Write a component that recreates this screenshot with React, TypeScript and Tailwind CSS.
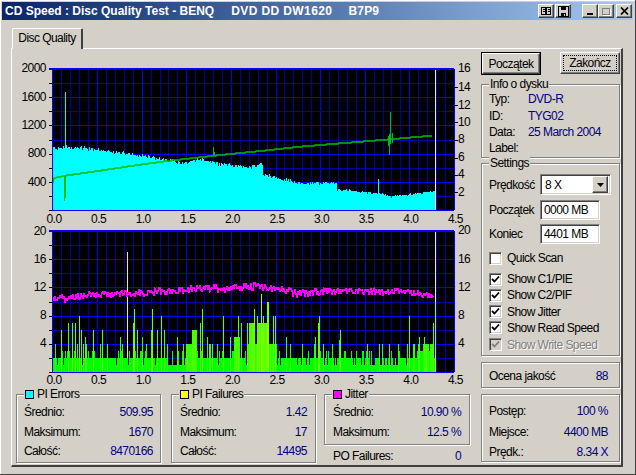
import React from "react";

const FONT = "'Liberation Sans', Arial, sans-serif";

let seed = 12345;
const rnd = () => {
  seed = (seed * 1664525 + 1013904223) % 4294967296;
  return seed / 4294967296;
};
const interp = (pts: number[][], x: number) => {
  for (let i = 1; i < pts.length; i++) {
    if (x <= pts[i][0]) {
      const [a, b] = pts[i - 1];
      const [c, d] = pts[i];
      return b + ((d - b) * (x - a)) / Math.max(1, c - a);
    }
  }
  return pts[pts.length - 1][1];
};

const X0 = 52.5;
const XS = 89.2;
const XEND = 435;

// chart 1 data
const cyanEnv = [[53,148.3],[62,147],[66,146],[100,149],[110,150.7],[133,153.3],[167,159.3],[183,162.3],[200,158.3],[217,163.3],[233,165],[247,166.7],[262,163.3],[263,173.3],[283,178.3],[300,182.7],[320,182.7],[336,182.7],[337,190],[350,190],[366,192.7],[383,194],[390,196.7],[416,193.3],[433,191.7],[435,192]];
let cyanPath = "";
for (let x = 53; x < XEND; x++) {
  let y = Math.round(interp(cyanEnv, x) + rnd() * 4 - 1.2);
  if (x > 320 && x < XEND) y = Math.round(interp(cyanEnv, x) + rnd() * 2 - 0.8);
  if (x === 65) y = 92;
  if (x === 378) y = 179;
  cyanPath += `M${x} ${y}H${x + 1}V210H${x}Z`;
}
const speedEnv = [[53,178.3],[65,175.7],[100,170.7],[133,165.7],[167,161],[200,157.3],[233,153.7],[267,150.3],[300,146.7],[320,145],[370,141],[432,135.7]];
let speedPts: string[] = ["53,183", "54,178"];
for (let x = 55; x <= 432; x += 1) {
  let y = Math.round(interp(speedEnv, x));
  speedPts.push(`${x},${y}`);
}
const speedLine = speedPts.join(" ");

// chart 2 data
const peaks: Record<number, number> = {};
const addPeak = (zx: number, v: number) => {
  const x = Math.round(zx / 3);
  peaks[x] = Math.max(peaks[x] || 0, v);
};
[[184,6],[205,7],[217,7],[225,7],[238,8],[244,6],[256,5],[280,6],[307,6],[361,5],[402,9],[411,6],[427,5],[457,9],[453,6],[470,6],[484,8],[493,6],[530,5],[605,9],[600,7],[622,5],[668,8],[690,5],[714,8],[705,5],[722,7],[762,9],[770,8],[782,11],[790,8],[800,10],[803,10],[818,8],[826,8],[857,5],[945,5],[955,7]].forEach(([a, b]) => addPeak(a, b));
[[8,8],[72,6],[68,4.5],[88,3],[105,3],[120,3],[137,3],[150,3],[190,4],[198,4],[225,3],[248,3],[272,4],[280,8],[295,4],[310,5],[325,5],[333,4],[345,4],[352,7],[356,10]].forEach(([a, b]) => addPeak(a + 948, b));
const floors: number[][] = [[397,408,7],[575,590,6],[560,575,4],[740,760,7],[770,800,7],[700,720,5],[750,830,4],[1250,1300,3],[1270,1300,4]];

const greenBars: { d: string; fill: string }[] = [];
for (let x = 53; x <= XEND; x++) {
  const zx = x * 3;
  let v = rnd() < 0.08 ? 1 : 2;
  if (zx > 500 && zx < 555) v = 1;
  const r = rnd();
  if (r > 0.78) v = 3;
  if (r > 0.92) v = 4;
  if (r < 0.05 && zx > 830) v = 1;
  if (zx > 1050 && zx < 1200 && rnd() < 0.25) v = 1;
  for (const [a, b, f] of floors) if (zx >= a && zx < b && rnd() < 0.85) v = Math.max(v, f);
  if (peaks[x]) v = Math.max(v, peaks[x]);
  const y = Math.round(372 - 7.05 * v);
  const red = v <= 3 ? 0 : Math.min(150, 20 + (v - 3) * 14 + rnd() * 40);
  greenBars.push({ d: `M${x} ${y}H${x + 1}V372H${x}Z`, fill: `rgb(${Math.round(red)},255,0)` });
}
const jitterEnv = [[53,10.2],[80,10.8],[110,11],[140,11.3],[180,11.5],[200,12],[225,11.7],[255,12.2],[300,11.1],[320,11.4],[400,11.4],[435,11]];
const jitterPts: string[] = [];
for (let x = 53; x <= 433; x++) {
  jitterPts.push(`${x},${Math.round(372 - 7.05 * interp(jitterEnv, x) + (rnd() - 0.5) * 7)}`);
}
const jitterLine = jitterPts.join(" ");

type ChartProps = {
  top: number;
  bottom: number;
  svgTop: number;
  svgH: number;
  leftLabels: [string, number][];
  rightLabels: [string, number][];
  rightTicks: number[];
  labelY: number;
  children: React.ReactNode;
};

function Chart({ top, bottom, svgTop, svgH, leftLabels, rightLabels, rightTicks, labelY, children }: ChartProps) {
  const verticals: number[] = [];
  for (let i = 1; i <= 45; i++) verticals.push(i);
  const horizontals: number[] = [];
  for (let i = 1; i < 10; i++) horizontals.push(i);
  const xLabels = ["0.0", "0.5", "1.0", "1.5", "2.0", "2.5", "3.0", "3.5", "4.0", "4.5"];
  return (
    <svg width={460} height={svgH} className="block overflow-visible" fontFamily={FONT} fontSize="12" letterSpacing="-0.55">
      <g transform={`translate(-16,${-svgTop})`}>
        <rect x={52} y={top} width={402} height={bottom - top} fill="#000" />
        {verticals.map((i) => {
          const x = Math.round(X0 + (XS * i) / 10);
          return <rect key={i} x={x} y={top} width={1} height={bottom - top} fill={i % 5 === 0 ? "#0000ff" : "#0000a8"} />;
        })}
        {horizontals.map((i) => {
          const y = Math.round(bottom - ((bottom - top) * i) / 10);
          return (
            <g key={i}>
              <rect x={52} y={y} width={402} height={1} fill={i % 2 === 0 ? "#0000ff" : "#0000a8"} />
              <rect x={49} y={y} width={3} height={1} fill="#000" />
            </g>
          );
        })}
        <rect x={435} y={top} width={1} height={bottom - top} fill="#e8e8e8" />
        {children}
        <rect x={49} y={top - 1} width={405} height={2} fill="#0000ff" />
        <rect x={52} y={top} width={1} height={bottom - top} fill="#0000ff" />
        <rect x={52} y={bottom} width={402} height={1} fill="#0000ff" />
        <rect x={49} y={bottom} width={3} height={1} fill="#000" />
        {rightTicks.map((y) => (
          <rect key={y} x={454} y={y} width={4} height={1} fill="#000" />
        ))}
        {leftLabels.map(([t, y]) => (
          <text key={t} x={46} y={y + 4} textAnchor="end" fill="#000">{t}</text>
        ))}
        {rightLabels.map(([t, y]) => (
          <text key={t} x={458} y={y + 4} fill="#000">{t}</text>
        ))}
        {xLabels.map((t, i) => (
          <text key={t} x={X0 + (XS * i) / 2 + 1.5} y={labelY + 4} textAnchor="middle" fill="#000">{t}</text>
        ))}
      </g>
    </svg>
  );
}

function Group({ title, swatch, className, children }: { title?: string; swatch?: string; className: string; children: React.ReactNode }) {
  return (
    <div className={`relative border border-[#808080] shadow-[1px_1px_0_#ffffff,inset_1px_1px_0_#ffffff] ${className}`}>
      {title && (
        <div className="absolute left-[7px] top-[-9px] flex h-[16px] items-center gap-[3px] bg-[#d4d0c8] px-[1px]">
          {swatch && <span className="h-[9px] w-[9px] border border-black" style={{ backgroundColor: swatch }} />}
          <span>{title}</span>
        </div>
      )}
      {children}
    </div>
  );
}

function Stat({ label, value }: { label: string; value: string }) {
  return (
    <div className="flex h-[16px] items-center justify-between">
      <span>{label}</span>
      <span className="text-[#000080]">{value}</span>
    </div>
  );
}

function Info({ label, value }: { label: string; value?: string }) {
  return (
    <div className="flex h-[16.4px] items-center">
      <span className="w-[39px]">{label}</span>
      <span className="text-[#000080]">{value}</span>
    </div>
  );
}

const raised = "border border-t-white border-l-white border-r-[#404040] border-b-[#404040] shadow-[inset_-1px_-1px_0_#808080]";
const sunken = "border border-t-[#808080] border-l-[#808080] border-r-white border-b-white shadow-[inset_1px_1px_0_#404040,inset_-1px_-1px_0_#d4d0c8]";

function Check({ label, checked = true, disabled = false, className = "" }: { label: string; checked?: boolean; disabled?: boolean; className?: string }) {
  return (
    <div className={`flex h-[16px] items-center gap-[5px] ${className}`}>
      <span className={`flex h-[13px] w-[13px] items-center justify-center ${sunken} ${disabled ? "bg-[#d4d0c8]" : "bg-white"}`}>
        {checked && (
          <svg width="9" height="9" viewBox="0 0 9 9">
            <path d="M1 4 L3.5 6.5 L8 1.5" fill="none" stroke={disabled ? "#808080" : "#000"} strokeWidth="1.8" />
          </svg>
        )}
      </span>
      <span className={disabled ? "text-[#808080] [text-shadow:1px_1px_0_#ffffff]" : ""}>{label}</span>
    </div>
  );
}

function CaptionBtn({ children, className = "" }: { children: React.ReactNode; className?: string }) {
  return <div className={`flex h-[14px] w-[16px] items-center justify-center bg-[#d4d0c8] ${raised} ${className}`}>{children}</div>;
}

export default function App() {
  return (
    <div className="flex h-[475px] w-[636px] flex-col overflow-hidden border-b border-r border-[#404040] bg-[#d4d0c8] p-[2px] text-[12px] tracking-[-0.55px] text-black shadow-[inset_1px_1px_0_#ffffff]" style={{ fontFamily: FONT }}>
      {/* title bar */}
      <div className="flex h-[18px] shrink-0 items-center bg-gradient-to-r from-[#0a246a] to-[#a6caf0] pl-[3px] pr-[1px]">
        <div className="flex flex-1 items-center whitespace-pre text-[12px] font-bold tracking-[0px] text-white">
          <span>CD Speed : Disc Quality Test - BENQ</span>
          <span className="ml-[17px] tracking-[0.4px]">DVD DD DW1620</span>
          <span className="ml-[16px] tracking-[0.2px]">B7P9</span>
        </div>
        <CaptionBtn>
          <svg width="12" height="10" viewBox="0 0 12 10" shapeRendering="crispEdges">
            <path d="M1.5 1.5H5.5V8.5H1.5Z M6.5 1.5H10.5V8.5H6.5Z" fill="none" stroke="#000" />
            <path d="M3 3H5M3 5H5M8 3H10M8 5H10" stroke="#000" />
          </svg>
        </CaptionBtn>
        <CaptionBtn className="ml-[1px]">
          <svg width="11" height="11" viewBox="0 0 11 11" shapeRendering="crispEdges">
            <path d="M0.5 0.5H10.5V10.5H0.5Z" fill="none" stroke="#000" />
            <path d="M3 1H8V4H3Z M3 7H8V10H3Z" fill="#000" />
            <path d="M6 8H7V9.5H6Z" fill="#d4d0c8" />
          </svg>
        </CaptionBtn>
        <CaptionBtn className="ml-[11px]">
          <span className="mt-[6px] block h-[2px] w-[6px] bg-black" />
        </CaptionBtn>
        <CaptionBtn>
          <svg width="10" height="9" viewBox="0 0 10 9" shapeRendering="crispEdges">
            <path d="M1.5 1.5H8.5V7.5H1.5Z" fill="none" stroke="#808080" />
            <path d="M1 1H9V2H1Z" fill="#808080" />
            <path d="M2 8.5H9.5V2" fill="none" stroke="#ffffff" />
          </svg>
        </CaptionBtn>
        <CaptionBtn className="ml-[2px]">
          <svg width="9" height="8" viewBox="0 0 9 8">
            <path d="M1 0.5L8 7.5M8 0.5L1 7.5" stroke="#000" strokeWidth="1.7" />
          </svg>
        </CaptionBtn>
      </div>

      {/* tab strip */}
      <div className="flex shrink-0 pl-[10px] pt-[8px]">
        <div className="relative z-10 -mb-px flex h-[21px] w-[71px] items-center justify-center rounded-t-[2px] border-l border-r-2 border-t border-l-white border-t-white border-r-[#404040] bg-[#d4d0c8] pb-[2px]">
          Disc Quality
        </div>
      </div>

      {/* panel */}
      <div className="ml-[9px] flex h-[419px] w-[612px] gap-[5px] border border-b-2 border-r-2 border-l-white border-t-white border-b-[#404040] border-r-[#404040] pl-[4px] pt-[3px]">
        {/* left column */}
        <div className="mt-[6px] flex w-[460px] shrink-0 flex-col">
          <Chart
            top={69}
            bottom={210}
            svgTop={58}
            svgH={168}
            leftLabels={[["2000", 68], ["1600", 97], ["1200", 125], ["800", 153], ["400", 182]]}
            rightLabels={[["16", 68], ["14", 87], ["12", 105], ["10", 122], ["8", 139], ["6", 157], ["4", 174], ["2", 192]]}
            rightTicks={[87, 105, 122, 140, 158, 175, 192]}
            labelY={219}
          >
            <path d={cyanPath} fill="#00ffff" shapeRendering="crispEdges" />
            <polyline points={speedLine} fill="none" stroke="#00c000" strokeWidth="1.4" />
            <path d="M64.5 176V201M65.5 176V198M213 147V156M214 152V156" stroke="#00c000" strokeWidth="1" shapeRendering="crispEdges" fill="none" />
            <path d="M390.5 112V144M389.5 134V155M392.5 133V143M388.5 136V146" stroke="#00c000" strokeWidth="1" shapeRendering="crispEdges" fill="none" />
          </Chart>
          <Chart
            top={231}
            bottom={372}
            svgTop={226}
            svgH={164}
            leftLabels={[["20", 231], ["16", 259], ["12", 287], ["8", 315], ["4", 343]]}
            rightLabels={[["20", 230], ["16", 259], ["12", 287], ["8", 315], ["4", 343]]}
            rightTicks={[]}
            labelY={380}
          >
            <rect x={127} y={252} width={1} height={120} fill="#ffff00" />
            {greenBars.map((b, i) => (
              <path key={i} d={b.d} fill={b.fill} shapeRendering="crispEdges" />
            ))}
            <polyline points={jitterLine} fill="none" stroke="#ff00ff" strokeWidth="1.5" shapeRendering="crispEdges" />
          </Chart>
          <div className="mt-[4px] flex items-start">
            <Group title="PI Errors" swatch="#00ffff" className="h-[69px] w-[145px] px-[7px] pt-[9px]">
              <div className="flex flex-col gap-[3.5px]">
                <Stat label="Średnio:" value="509.95" />
                <Stat label="Maksimum:" value="1670" />
                <Stat label="Całość:" value="8470166" />
              </div>
            </Group>
            <Group title="PI Failures" swatch="#ffff00" className="ml-[10px] h-[69px] w-[145px] px-[8px] pt-[9px]">
              <div className="flex flex-col gap-[3.5px]">
                <Stat label="Średnio:" value="1.42" />
                <Stat label="Maksimum:" value="17" />
                <Stat label="Całość:" value="14495" />
              </div>
            </Group>
            <div className="ml-[8px] w-[146px]">
              <Group title="Jitter" swatch="#ff00ff" className="h-[51px] px-[8px] pt-[9px]">
                <div className="flex flex-col gap-[4px]">
                  <Stat label="Średnio:" value="10.90 %" />
                  <Stat label="Maksimum:" value="12.5 %" />
                </div>
              </Group>
              <div className="mt-[3px] px-[9px]">
                <Stat label="PO Failures:" value="0" />
              </div>
            </div>
          </div>
        </div>

        {/* right column */}
        <div className="flex w-[139px] shrink-0 flex-col">
          <div className="flex items-start justify-between">
            <div className="flex h-[23px] w-[60px] items-center justify-center border border-black">
              <div className={`flex h-[21px] w-[58px] items-center justify-center ${raised}`}>Początek</div>
            </div>
            <div className={`flex h-[22px] w-[60px] items-center justify-center ${raised}`}>
              <div className="flex h-[16px] w-[54px] items-center justify-center border border-dotted border-black">Zakończ</div>
            </div>
          </div>

          <Group title="Info o dysku" className="mt-[9px] h-[74px] px-[7px] pt-[6px]">
            <Info label="Typ:" value="DVD-R" />
            <Info label="ID:" value="TYG02" />
            <Info label="Data:" value="25 March 2004" />
            <Info label="Label:" />
          </Group>

          <Group title="Settings" className="mt-[5px] h-[193px] px-[7px] pt-[10px]">
            <div className="flex h-[21px] items-center">
              <span className="w-[51px]">Prędkość</span>
              <div className={`flex h-[21px] w-[71px] items-center justify-between bg-white pl-[4px] pr-[2px] ${sunken}`}>
                <span>8 X</span>
                <div className={`flex h-[17px] w-[16px] items-center justify-center bg-[#d4d0c8] ${raised}`}>
                  <svg width="7" height="4" viewBox="0 0 7 4"><path d="M0 0H7L3.5 4Z" fill="#000" /></svg>
                </div>
              </div>
            </div>
            <div className="mt-[5px] flex h-[20px] items-center">
              <span className="w-[51px]">Początek</span>
              <div className={`flex h-[20px] w-[60px] items-center bg-white pl-[3px] ${sunken}`}>0000 MB</div>
            </div>
            <div className="mt-[4px] flex h-[20px] items-center">
              <span className="w-[51px]">Koniec</span>
              <div className={`flex h-[20px] w-[60px] items-center bg-white pl-[3px] ${sunken}`}>4401 MB</div>
            </div>
            <Check label="Quick Scan" checked={false} className="mt-[6px]" />
            <Check label="Show C1/PIE" className="mt-[5px]" />
            <Check label="Show C2/PIF" />
            <Check label="Show Jitter" className="mt-[0.5px]" />
            <Check label="Show Read Speed" />
            <Check label="Show Write Speed" disabled className="mt-[1px]" />
          </Group>

          <Group className="mt-[6px] h-[26px] pl-[7px] pr-[11px] pt-[5px]">
            <Stat label="Ocena jakość" value="88" />
          </Group>

          <Group className="mt-[6px] h-[68px] pl-[7px] pr-[11px] pt-[8px]">
            <div className="flex flex-col gap-[4.5px]">
              <Stat label="Postęp:" value="100 %" />
              <Stat label="Miejsce:" value="4400 MB" />
              <Stat label="Prędk.:" value="8.34 X" />
            </div>
          </Group>
        </div>
      </div>
    </div>
  );
}
